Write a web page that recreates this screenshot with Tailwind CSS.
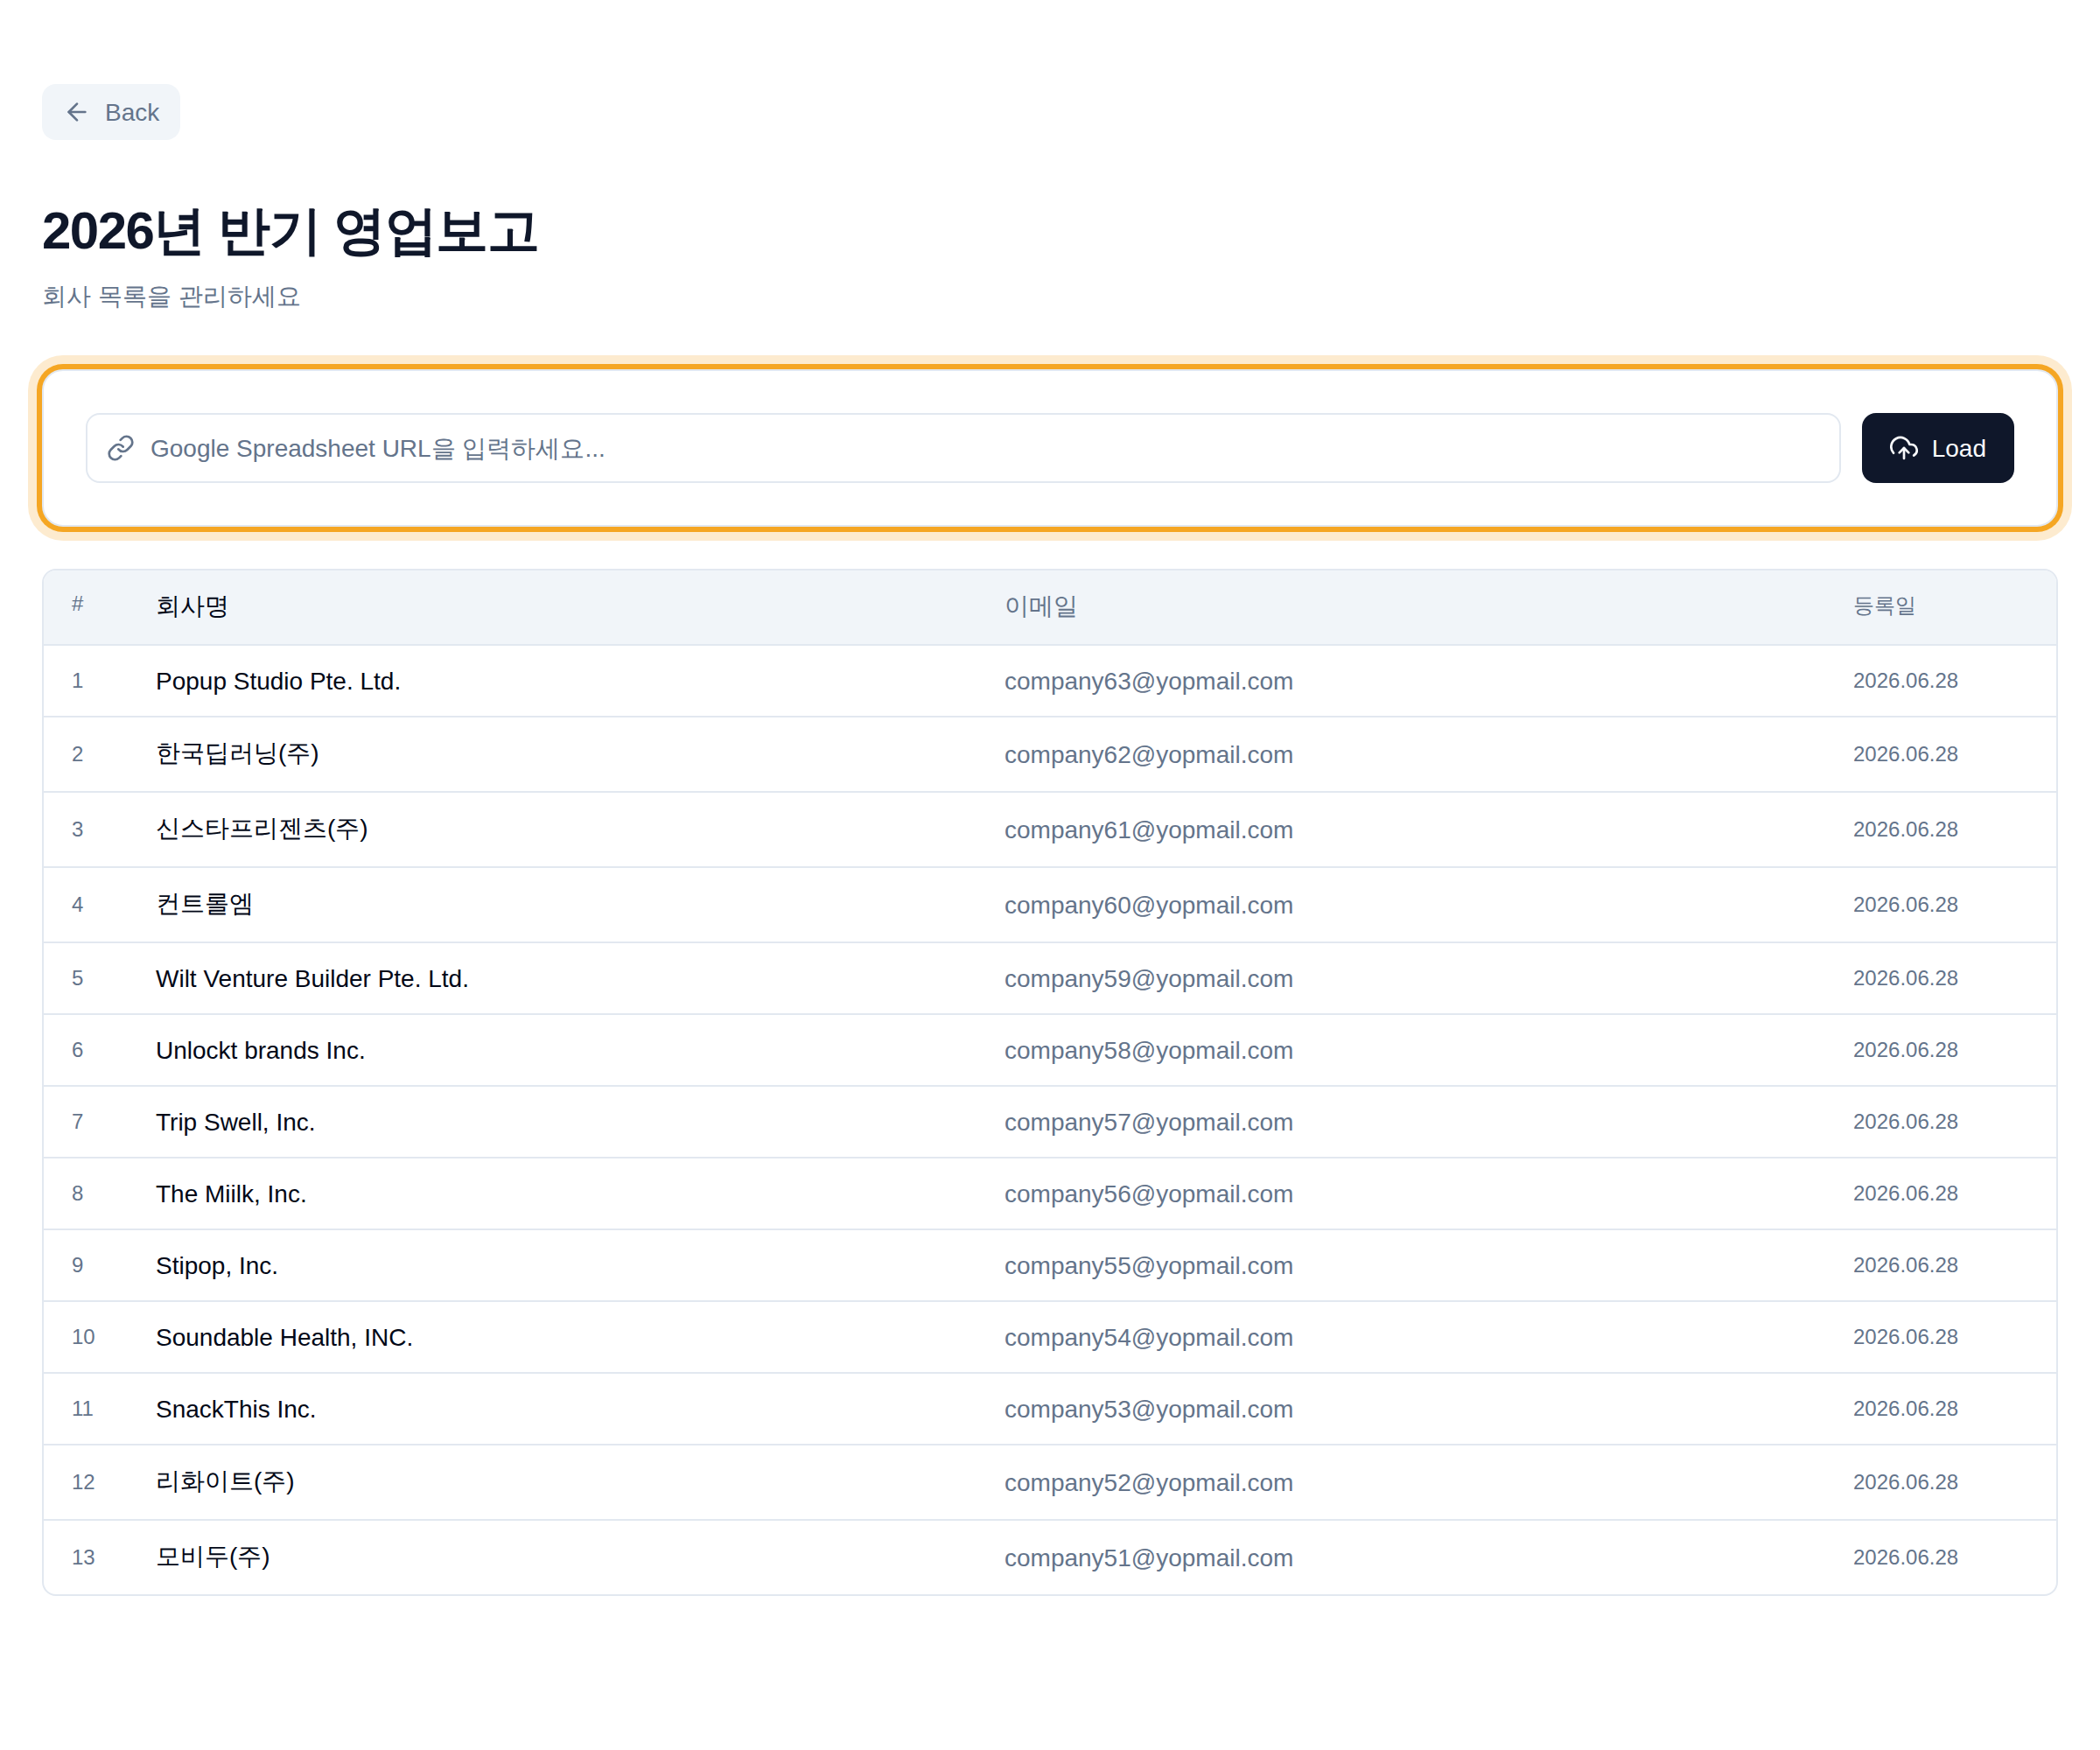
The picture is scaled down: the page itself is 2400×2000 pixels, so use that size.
<!DOCTYPE html>
<html lang="ko">
<head>
<meta charset="utf-8">
<meta name="viewport" content="width=device-width, initial-scale=1">
<title>2026년 반기 영업보고</title>
<script src="https://cdn.jsdelivr.net/npm/@tailwindcss/browser@4"></script>
</head>
<body class="min-h-screen bg-white px-12 py-24 font-['Liberation_Sans',Arial,sans-serif] text-[28px] leading-8 text-[#64748b]">
<main>
  <button type="button" class="flex h-16 items-center gap-4 rounded-2xl bg-[#f1f5f9] px-6 leading-[33px]">
    <svg class="size-8" viewBox="0 0 24 24" fill="none" stroke="currentColor" stroke-width="2" stroke-linecap="round" stroke-linejoin="round" aria-hidden="true"><path d="m12 19-7-7 7-7"/><path d="M19 12H5"/></svg>
    Back
  </button>

  <header class="mt-16">
    <h1 class="text-[60px] leading-[80px] font-bold tracking-tight text-[#0f172a]">2026년 반기 영업보고</h1>
    <p class="mt-4 leading-[38px]">회사 목록을 관리하세요</p>
  </header>

  <form class="mt-16 flex gap-6 rounded-3xl border-2 border-[#e2e8f0] bg-white p-12 shadow-[0_0_0_6px_#f5a623,0_0_0_16px_rgba(245,166,35,0.22)]" onsubmit="return false">
    <label class="flex h-20 flex-1 items-center gap-[18px] rounded-2xl border-2 border-[#e2e8f0] px-[22px]">
      <svg class="size-8" viewBox="0 0 24 24" fill="none" stroke="currentColor" stroke-width="2" stroke-linecap="round" stroke-linejoin="round" aria-hidden="true"><path d="M10 13a5 5 0 0 0 7.54.54l3-3a5 5 0 0 0-7.07-7.07l-1.72 1.71"/><path d="M14 11a5 5 0 0 0-7.54-.54l-3 3a5 5 0 0 0 7.07 7.07l1.71-1.71"/></svg>
      <input type="url" aria-label="Google Spreadsheet URL" placeholder="Google Spreadsheet URL을 입력하세요..." class="min-w-0 flex-1 leading-[33px] outline-none placeholder:text-[#64748b]">
    </label>
    <button type="submit" class="flex h-20 items-center gap-4 rounded-2xl bg-[#0f172a] px-8 leading-[33px] text-[#f8fafc]">
      <svg class="size-8" viewBox="0 0 24 24" fill="none" stroke="currentColor" stroke-width="2" stroke-linecap="round" stroke-linejoin="round" aria-hidden="true"><path d="m16 16-4-4-4 4"/><path d="M12 12v9"/><path d="M20.39 18.39A5 5 0 0 0 18 9h-1.26A8 8 0 1 0 3 16.3"/></svg>
      Load
    </button>
  </form>

  <div class="mt-12 overflow-hidden rounded-2xl border-2 border-[#e2e8f0]">
    <table class="w-full table-fixed border-separate border-spacing-0 text-left [&_td]:border-[#e2e8f0] [&_th]:border-b-2 [&_th]:border-[#e2e8f0] [&_th]:align-top [&_th]:font-normal [&_tr:not(:last-child)>td]:border-b-2">
      <colgroup><col class="w-32"><col><col><col class="w-[232px]"></colgroup>
      <thead class="bg-[#f1f5f9]">
        <tr><th scope="col" class="py-6 pl-8 text-2xl leading-7">#</th><th scope="col" class="pt-[25px] pb-[27px] text-[#020817]">회사명</th><th scope="col" class="pt-[25px] pb-[27px]">이메일</th><th scope="col" class="pt-[26px] pb-6 text-2xl leading-7">등록일</th></tr>
      </thead>
      <tbody id="companies"></tbody>
    </table>
  </div>
</main>
<script>
  const names = ["Popup Studio Pte. Ltd.", "한국딥러닝(주)", "신스타프리젠츠(주)", "컨트롤엠", "Wilt Venture Builder Pte. Ltd.", "Unlockt brands Inc.", "Trip Swell, Inc.", "The Miilk, Inc.", "Stipop, Inc.", "Soundable Health, INC.", "SnackThis Inc.", "리화이트(주)", "모비두(주)"];
  // Hangul names take a slightly taller row than Latin ones
  const namePadding = (name) => /[가-힣]/.test(name) ? "pt-[25px] pb-[27px]" : "pt-[25px] pb-[23px]";
  document.getElementById("companies").innerHTML = names.map((name, i) => `
    <tr>
      <td class="pl-8 text-2xl leading-7">${i + 1}</td>
      <td class="${namePadding(name)} text-[#020817]">${name}</td>
      <td class="pt-[25px] pb-[23px]">company${63 - i}@yopmail.com</td>
      <td class="text-2xl leading-7">2026.06.28</td>
    </tr>`).join("");
</script>
</body>
</html>
